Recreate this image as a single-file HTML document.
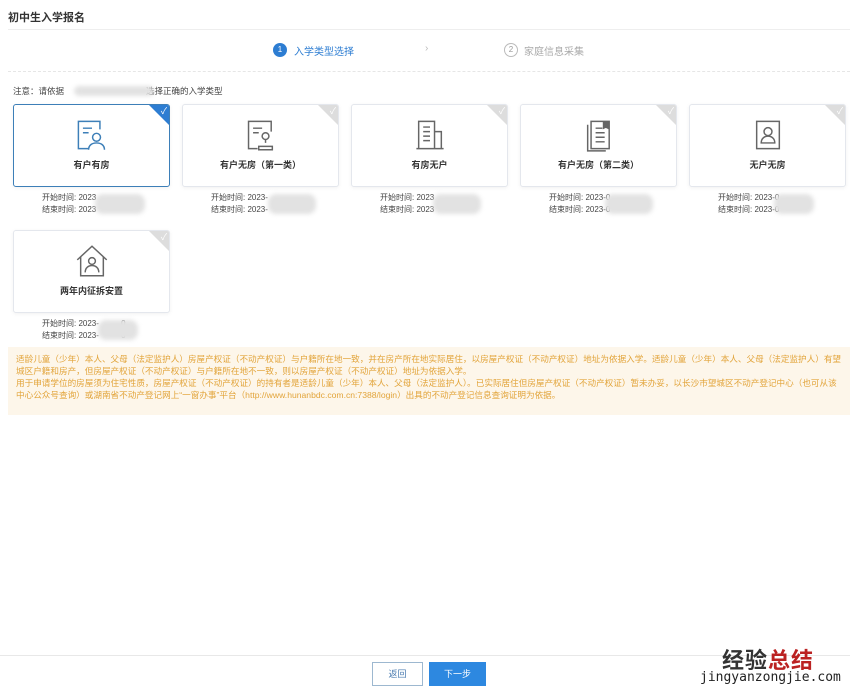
<html><head><style>
body{margin:0;width:850px;height:692px;background:#fff;font-family:"Liberation Sans","Noto Sans CJK SC",sans-serif;position:relative;overflow:hidden;color:#333}
.a{position:absolute}
.card{position:absolute;width:155px;height:81px;border:1px solid #e4e7ed;border-radius:3px;background:#fff;box-shadow:0 1px 4px rgba(0,0,0,.06);overflow:hidden}
.card.sel{border-color:#3d7fb8}
.card .t{position:absolute;top:53px;width:100%;text-align:center;font-size:9px;font-weight:bold;color:#333}
.card .c{position:absolute;right:0;top:0;width:0;height:0;border-top:20px solid #ddd;border-left:20px solid transparent}
.card.sel .c{border-top-color:#2d7dd2}
.card .c::after{content:"✓";position:absolute;right:2px;top:-21px;color:#fff;font-size:9px}
.card svg{position:absolute;left:61px;top:13px}
.tm{position:absolute;font-size:8px;color:#444;line-height:12px}
.blur{position:absolute;background:#e2e2e2;border-radius:8px;filter:blur(2px)}
</style></head><body>
<div class="a" style="left:8px;top:9px;font-size:11px;font-weight:bold">初中生入学报名</div>
<div class="a" style="left:8px;top:29px;width:842px;border-top:1px solid #eee"></div>
<div class="a" style="left:273px;top:43px;width:14px;height:14px;border-radius:50%;background:#2d7dd2;color:#fff;font-size:8px;text-align:center;line-height:14px">1</div>
<div class="a" style="left:294px;top:43px;font-size:10px;color:#2d7dd2">入学类型选择</div>
<div class="a" style="left:425px;top:43px;font-size:10px;color:#bbb">›</div>
<div class="a" style="left:504px;top:43px;width:12px;height:12px;border-radius:50%;border:1px solid #bbb;color:#999;font-size:8px;text-align:center;line-height:12px">2</div>
<div class="a" style="left:524px;top:43px;font-size:10px;color:#aaa">家庭信息采集</div>
<div class="a" style="left:8px;top:71px;width:842px;border-top:1px dashed #e6e6e6"></div>
<div class="a" style="left:13px;top:85px;font-size:8.5px;color:#444">注意：请依据<span style="display:inline-block;width:82px"></span>选择正确的入学类型</div>
<div class="blur" style="left:74px;top:86px;width:80px;height:10px"></div>

<div class="card sel" style="left:13px;top:104px"><svg width="34" height="34" viewBox="0 0 30 30" fill="none" stroke="#3d7fb8" stroke-width="1.3"><path d="M22 10V3H3v24h9"/><path d="M7 9h8M7 13h5"/><circle cx="19" cy="17" r="3.5"/><path d="M12 28c0-4 3-6 7-6s7 2 7 6"/></svg><div class="t">有户有房</div><div class="c"></div></div>
<div class="card" style="left:182px;top:104px"><svg width="34" height="34" viewBox="0 0 30 30" fill="none" stroke="#666" stroke-width="1.3"><path d="M24 12V3H4v24h8"/><path d="M8 9h8M8 13h5"/><circle cx="19" cy="16" r="3"/><path d="M19 19v3M13 25h12v3H13z"/></svg><div class="t">有户无房（第一类）</div><div class="c"></div></div>
<div class="card" style="left:351px;top:104px"><svg width="34" height="34" viewBox="0 0 30 30" fill="none" stroke="#666" stroke-width="1.3"><path d="M5 27V3h14v24M19 12h6v15M3 27h24M9 8h6M9 12h6M9 16h6M9 20h6"/></svg><div class="t">有房无户</div><div class="c"></div></div>
<div class="card" style="left:520px;top:104px"><svg width="34" height="34" viewBox="0 0 30 30" fill="none" stroke="#666" stroke-width="1.3"><path d="M8 3h16v24H8zM5 6v23h16M12 9h6M12 13h8M12 17h8M12 21h8"/><path d="M19 3v6l2-1 2 1V3" fill="#666"/></svg><div class="t">有户无房（第二类）</div><div class="c"></div></div>
<div class="card" style="left:689px;top:104px"><svg width="34" height="34" viewBox="0 0 30 30" fill="none" stroke="#666" stroke-width="1.3"><path d="M5 3h20v24H5z"/><circle cx="15" cy="12" r="3.5"/><path d="M9 22c0-4 3-6 6-6s6 2 6 6z"/></svg><div class="t">无户无房</div><div class="c"></div></div>
<div class="card" style="left:13px;top:230px"><svg width="34" height="34" viewBox="0 0 30 30" fill="none" stroke="#666" stroke-width="1.3"><path d="M2 14L15 2l13 12M5 11v17h20V11"/><circle cx="15" cy="15" r="3"/><path d="M9 25c0-4 3-6 6-6s6 2 6 6"/></svg><div class="t">两年内征拆安置</div><div class="c"></div></div>

<div class="tm" style="left:42px;top:192px">开始时间: 2023<br>结束时间: 2023</div><div class="blur" style="left:95px;top:194px;width:50px;height:20px"></div>
<div class="tm" style="left:211px;top:192px">开始时间: 2023-<br>结束时间: 2023-</div><div class="blur" style="left:268px;top:194px;width:48px;height:20px"></div>
<div class="tm" style="left:380px;top:192px">开始时间: 2023<br>结束时间: 2023</div><div class="blur" style="left:433px;top:194px;width:48px;height:20px"></div>
<div class="tm" style="left:549px;top:192px">开始时间: 2023-0<br>结束时间: 2023-0</div><div class="blur" style="left:605px;top:194px;width:48px;height:20px"></div>
<div class="tm" style="left:718px;top:192px">开始时间: 2023-0<br>结束时间: 2023-0</div><div class="blur" style="left:774px;top:194px;width:40px;height:20px"></div>
<div class="tm" style="left:42px;top:318px">开始时间: 2023-&nbsp;&nbsp;&nbsp;&nbsp;&nbsp;&nbsp;&nbsp;&nbsp;&nbsp;&nbsp;0<br>结束时间: 2023-&nbsp;&nbsp;&nbsp;&nbsp;&nbsp;&nbsp;&nbsp;&nbsp;&nbsp;&nbsp;0</div><div class="blur" style="left:98px;top:320px;width:40px;height:20px"></div>

<div class="a" style="left:8px;top:347px;width:842px;height:68px;background:#fdf6ea;color:#e2a43a;font-size:8.6px;line-height:12px;padding:6px 8px;box-sizing:border-box">适龄儿童（少年）本人、父母（法定监护人）房屋产权证（不动产权证）与户籍所在地一致，并在房产所在地实际居住，以房屋产权证（不动产权证）地址为依据入学。适龄儿童（少年）本人、父母（法定监护人）有望城区户籍和房产，但房屋产权证（不动产权证）与户籍所在地不一致，则以房屋产权证（不动产权证）地址为依据入学。<br>用于申请学位的房屋须为住宅性质，房屋产权证（不动产权证）的持有者是适龄儿童（少年）本人、父母（法定监护人）。已实际居住但房屋产权证（不动产权证）暂未办妥，以长沙市望城区不动产登记中心（也可从该中心公众号查询）或湖南省不动产登记网上“一窗办事”平台（http://www.hunanbdc.com.cn:7388/login）出具的不动产登记信息查询证明为依据。</div>

<div class="a" style="left:0;top:655px;width:850px;border-top:1px solid #e8e8e8"></div>
<div class="a" style="left:372px;top:662px;width:49px;height:22px;border:1px solid #9db8d0;font-size:9px;color:#4a7bb0;text-align:center;line-height:22px">返回</div>
<div class="a" style="left:429px;top:662px;width:57px;height:24px;background:#2d88e0;font-size:9px;color:#fff;text-align:center;line-height:24px">下一步</div>
<div class="a" style="left:722px;top:643px;font-size:22px;font-weight:bold;color:#333;letter-spacing:1px">经验<span style="color:#b22">总结</span></div>
<div class="a" style="left:700px;top:670px;font-size:13px;color:#222;font-family:'DejaVu Sans Mono',monospace">jingyanzongjie.com</div>
</body></html>
